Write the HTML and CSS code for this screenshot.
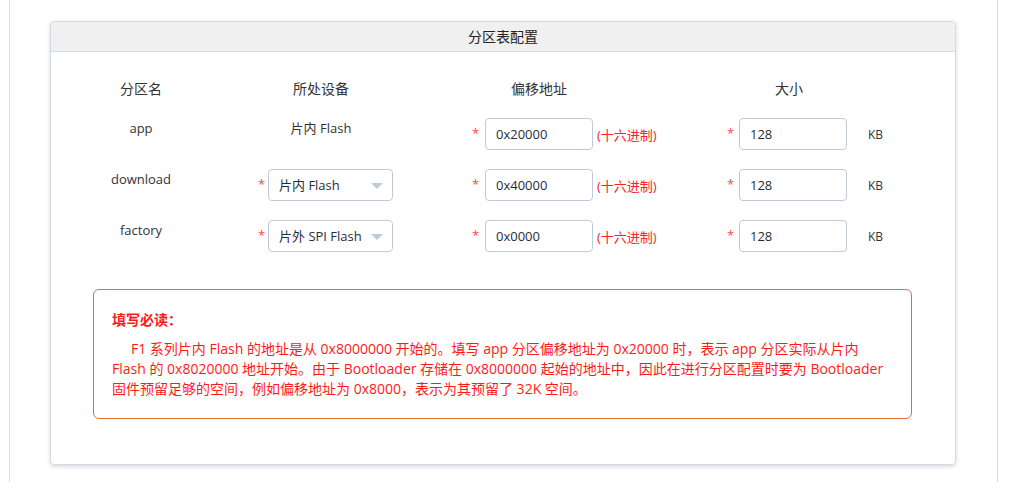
FILE: index.html
```html
<!DOCTYPE html>
<html lang="zh-CN">
<head>
<meta charset="utf-8">
<title>分区表配置</title>
<link rel="stylesheet" href="styles.css">
</head>
<body>
<div class="page">
  <div class="card">
    <div class="card-header">分区表配置</div>
    <div class="card-body">
      <div class="row head">
        <div class="c1">分区名</div>
        <div class="c2">所处设备</div>
        <div class="c3">偏移地址</div>
        <div class="c4">大小</div>
      </div>
      <div class="row">
        <div class="c1 label">app</div>
        <div class="c2 label">片内 Flash</div>
        <div class="c3 field"><span class="req">*</span><div class="input">0x20000</div><span class="hex">(十六进制)</span></div>
        <div class="c4 field"><span class="req">*</span><div class="input">128</div><span class="unit">KB</span></div>
      </div>
      <div class="row">
        <div class="c1 label">download</div>
        <div class="c2 field sel"><span class="req">*</span><div class="select">片内 Flash<span class="arrow"></span></div></div>
        <div class="c3 field"><span class="req">*</span><div class="input">0x40000</div><span class="hex">(十六进制)</span></div>
        <div class="c4 field"><span class="req">*</span><div class="input">128</div><span class="unit">KB</span></div>
      </div>
      <div class="row">
        <div class="c1 label">factory</div>
        <div class="c2 field sel"><span class="req">*</span><div class="select">片外 SPI Flash<span class="arrow"></span></div></div>
        <div class="c3 field"><span class="req">*</span><div class="input">0x0000</div><span class="hex">(十六进制)</span></div>
        <div class="c4 field"><span class="req">*</span><div class="input">128</div><span class="unit">KB</span></div>
      </div>
      <div class="notice">
        <div class="notice-title">填写必读：</div>
        <p class="notice-text">F1 系列片内 Flash 的地址是从 0x8000000 开始的。填写 app 分区偏移地址为 0x20000 时，表示 app 分区实际从片内 Flash 的 0x8020000 地址开始。由于 Bootloader 存储在 0x8000000 起始的地址中，因此在进行分区配置时要为 Bootloader 固件预留足够的空间，例如偏移地址为 0x8000，表示为其预留了 32K 空间。</p>
      </div>
    </div>
  </div>
</div>
</body>
</html>
```

FILE: styles.css
```css
html, body {
  margin: 0;
  padding: 0;
  background: #fff;
}
body {
  font-family: "Open Sans", "Noto Sans CJK SC", sans-serif;
  font-size: 13px;
  color: #333;
}
.page {
  margin-left: 9px;
  width: 989px;
  height: 482px;
  border-left: 1px solid #dcdcdc;
  border-right: 1px solid #dcdcdc;
  box-sizing: border-box;
  padding-top: 21px;
  padding-left: 40px;
}
.card {
  width: 906px;
  border: 1px solid #d1dbe5;
  border-radius: 4px;
  box-shadow: 0 2px 4px rgba(0,0,0,0.12), 0 0 6px rgba(0,0,0,0.04);
  background: #fff;
  box-sizing: border-box;
}
.card-header {
  height: 29px;
  line-height: 29px;
  background: #f0f0f0;
  border-bottom: 1px solid #d1dbe5;
  text-align: center;
  font-size: 14px;
  color: #222;
  border-radius: 4px 4px 0 0;
}
.card-body {
  padding: 27px 0 45px 0;
}
.row {
  display: flex;
  height: 32px;
  margin-bottom: 19px;
}
.row.head {
  height: 20px;
  font-size: 14px;
  line-height: 20px;
}
.c1 { width: 100px; margin-left: 40px; text-align: center; flex-shrink: 0; }
.c2 { width: 260px; text-align: center; flex-shrink: 0; }
.c3 { width: 176px; text-align: center; flex-shrink: 0; }
.c4 { width: 324px; text-align: center; flex-shrink: 0; }
.label {
  line-height: 20px;
  font-size: 13px;
}
.field {
  display: flex;
  align-items: center;
  text-align: left;
}
.c2.field { padding-left: 67px; box-sizing: border-box; }
.c3.field { padding-left: 21px; box-sizing: border-box; }
.c4.field { padding-left: 100px; box-sizing: border-box; }
.req {
  color: #ff4949;
  width: 12px;
  flex-shrink: 0;
  font-size: 13px;
  line-height: 32px;
  position: relative;
  top: -1px;
}
.c2 .req { width: 10px; }
.c3 .req { width: 13px; }
.input, .select {
  height: 32px;
  line-height: 30px;
  border: 1px solid #bfcbd9;
  border-radius: 4px;
  box-sizing: border-box;
  padding-left: 10px;
  width: 108px;
  flex-shrink: 0;
  color: #1f2d3d;
}
.select {
  width: 125px;
  position: relative;
}
.arrow {
  position: absolute;
  right: 9px;
  top: 13px;
  width: 0;
  height: 0;
  border-left: 6px solid transparent;
  border-right: 6px solid transparent;
  border-top: 6px solid #bfcbd9;
}
.hex {
  color: #ff2020;
  margin-left: 4px;
  white-space: nowrap;
  flex-shrink: 0;
}
.unit {
  margin-left: 21px;
  font-size: 12px;
  color: #333;
  flex-shrink: 0;
}
.notice {
  margin: 37px 43px 0 42px;
  border: 1px solid #e4702c;
  border-radius: 6px;
  padding: 20px 18px 19px 18px;
  color: #ff1a1a;
  font-size: 14px;
}
.notice-title {
  font-weight: bold;
  line-height: 20px;
  margin-bottom: 9px;
}
.notice-text {
  margin: 0;
  line-height: 20px;
  text-indent: 19px;
}
```
